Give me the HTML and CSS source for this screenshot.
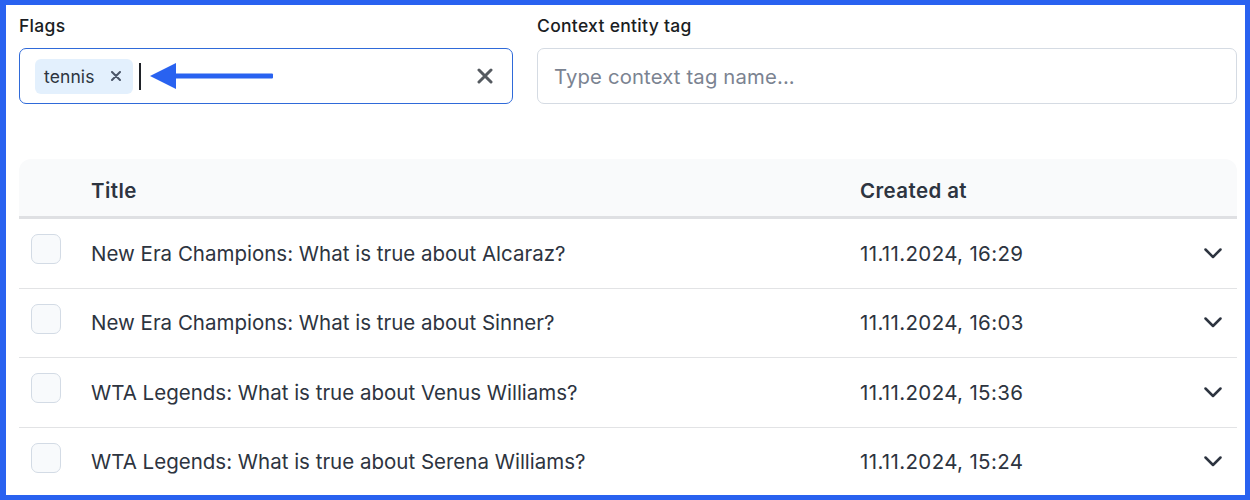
FILE: index.html
```html
<!DOCTYPE html>
<html lang="en">
<head>
<meta charset="utf-8">
<title>Flags</title>
<link rel="stylesheet" href="styles.css">
</head>
<body>
<div class="frame">
  <div class="fields">
    <div class="field">
      <label class="label">Flags</label>
      <div class="input input-focused">
        <span class="tag">
          <span class="tag-text">tennis</span>
          <svg class="tag-close" width="10" height="10" viewBox="0 0 10 10"><path d="M1 1L9 9M9 1L1 9" stroke="#4a5568" stroke-width="2" stroke-linecap="round"/></svg>
        </span>
        <span class="caret"></span>
        <svg class="arrow" width="124" height="27" viewBox="0 0 124 27"><polygon points="0,13 26,0 26,26" fill="#2962f0"/><rect x="24" y="10.5" width="99" height="5" rx="1" fill="#2962f0"/></svg>
        <span class="spacer"></span>
        <svg class="clear" width="16" height="16" viewBox="0 0 16 16"><path d="M2 2L14 14M14 2L2 14" stroke="#555a60" stroke-width="3" stroke-linecap="round"/></svg>
      </div>
    </div>
    <div class="field">
      <label class="label">Context entity tag</label>
      <div class="input">
        <span class="placeholder">Type context tag name...</span>
      </div>
    </div>
  </div>

  <div class="table">
    <div class="thead">
      <div class="cell-check"></div>
      <div class="th col-title">Title</div>
      <div class="th col-date">Created at</div>
      <div class="cell-chev"></div>
    </div>
    <div class="row">
      <div class="cell-check"><span class="checkbox"></span></div>
      <div class="td col-title">New Era Champions: What is true about Alcaraz?</div>
      <div class="td col-date">11.11.2024, 16:29</div>
      <div class="cell-chev"><svg width="18" height="11" viewBox="0 0 18 11"><path d="M1.5 1.5L9 9L16.5 1.5" fill="none" stroke="#2d3440" stroke-width="2.5" stroke-linecap="round" stroke-linejoin="round"/></svg></div>
    </div>
    <div class="row">
      <div class="cell-check"><span class="checkbox"></span></div>
      <div class="td col-title">New Era Champions: What is true about Sinner?</div>
      <div class="td col-date">11.11.2024, 16:03</div>
      <div class="cell-chev"><svg width="18" height="11" viewBox="0 0 18 11"><path d="M1.5 1.5L9 9L16.5 1.5" fill="none" stroke="#2d3440" stroke-width="2.5" stroke-linecap="round" stroke-linejoin="round"/></svg></div>
    </div>
    <div class="row">
      <div class="cell-check"><span class="checkbox"></span></div>
      <div class="td col-title">WTA Legends: What is true about Venus Williams?</div>
      <div class="td col-date">11.11.2024, 15:36</div>
      <div class="cell-chev"><svg width="18" height="11" viewBox="0 0 18 11"><path d="M1.5 1.5L9 9L16.5 1.5" fill="none" stroke="#2d3440" stroke-width="2.5" stroke-linecap="round" stroke-linejoin="round"/></svg></div>
    </div>
    <div class="row">
      <div class="cell-check"><span class="checkbox"></span></div>
      <div class="td col-title">WTA Legends: What is true about Serena Williams?</div>
      <div class="td col-date">11.11.2024, 15:24</div>
      <div class="cell-chev"><svg width="18" height="11" viewBox="0 0 18 11"><path d="M1.5 1.5L9 9L16.5 1.5" fill="none" stroke="#2d3440" stroke-width="2.5" stroke-linecap="round" stroke-linejoin="round"/></svg></div>
    </div>
  </div>
</div>
</body>
</html>
```
FILE: styles.css
```css
* { box-sizing: border-box; }
html, body { margin: 0; padding: 0; background: #fff; }
body {
  font-family: Inter, "Noto Sans", "Liberation Sans", sans-serif;
  color: #2d3440;
}
.frame {
  width: 1250px;
  height: 500px;
  border: 5px solid #2962f0;
  border-left-width: 6px;
  padding: 9px 8px 0 13px;
  overflow: hidden;
  background: #fff;
}
.fields {
  display: grid;
  grid-template-columns: 494px 1fr;
  column-gap: 24px;
}
.field { display: flex; flex-direction: column; }
.label {
  font-size: 17.5px;
  line-height: 24px;
  font-weight: 500;
  letter-spacing: 0.3px;
  color: #1a1d23;
  margin-bottom: 10px;
}
.input {
  height: 56px;
  border: 1px solid #d5dbe3;
  border-radius: 7px;
  display: flex;
  align-items: center;
  padding: 0 19px 0 16px;
}
.input-focused {
  border-color: #2f6ad9;
  padding-left: 15px;
}
.tag {
  height: 35px;
  background: #e3f0fd;
  border-radius: 6px;
  display: flex;
  align-items: center;
  padding: 0 12px 0 9px;
}
.tag-text {
  font-size: 17.5px;
  letter-spacing: 0.1px;
  color: #2d3440;
  margin-right: 16px;
}
.tag-close { display: block; }
.caret {
  width: 2px;
  height: 27px;
  background: #1f2228;
  margin-left: 6px;
}
.arrow { margin-left: 9px; display: block; }
.spacer { flex: 1; }
.clear { display: block; }
.placeholder {
  font-size: 20.3px;
  letter-spacing: 0.15px;
  color: #7b8391;
}
.table {
  margin-top: 55px;
}
.thead {
  display: grid;
  grid-template-columns: 72px 769px 1fr 48px;
  height: 60px;
  padding-top: 6px;
  align-items: center;
  background: #f9fafb;
  border-radius: 12px 12px 0 0;
  border-bottom: 3px solid #dfe0e3;
}
.th {
  font-size: 20.5px;
  font-weight: 600;
  letter-spacing: 0.4px;
  color: #2d3440;
}
.row {
  display: grid;
  grid-template-columns: 72px 769px 1fr 48px;
  height: 69.5px;
  align-items: center;
  border-bottom: 1px solid #e2e3e5;
}
.td {
  font-size: 20.5px;
  color: #2d3440;
}
.td.col-date { letter-spacing: 0.35px; }
.cell-check {
  align-self: start;
  padding: 15px 0 0 12px;
}
.checkbox {
  display: block;
  width: 30px;
  height: 30px;
  border: 1px solid #d3dbe5;
  border-radius: 7px;
  background: #f8fafc;
}
.cell-chev {
  display: flex;
  justify-content: flex-end;
  padding-right: 15px;
}
.cell-chev svg { display: block; }
```
